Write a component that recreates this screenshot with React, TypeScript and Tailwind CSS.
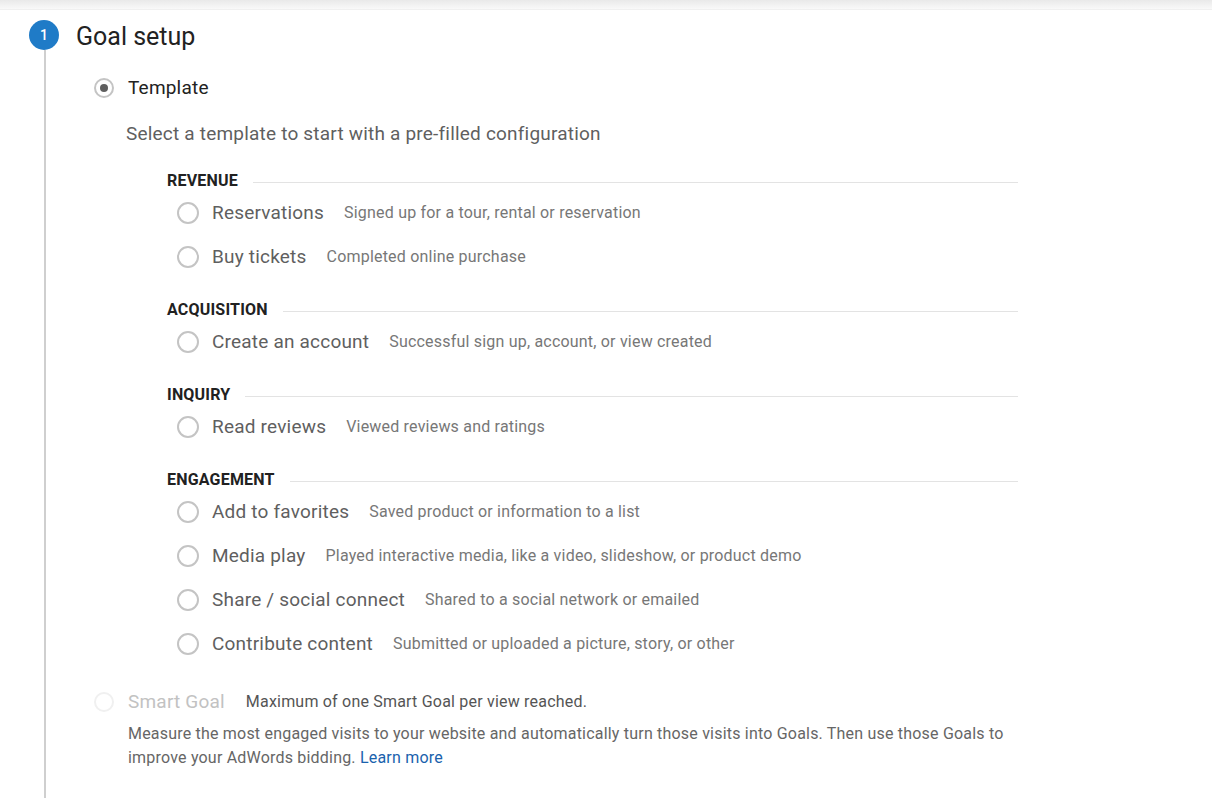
import React from "react";

type Option = { label: string; desc: string };
type Group = { title: string; options: Option[] };

const groups: Group[] = [
  {
    title: "REVENUE",
    options: [
      { label: "Reservations", desc: "Signed up for a tour, rental or reservation" },
      { label: "Buy tickets", desc: "Completed online purchase" },
    ],
  },
  {
    title: "ACQUISITION",
    options: [{ label: "Create an account", desc: "Successful sign up, account, or view created" }],
  },
  {
    title: "INQUIRY",
    options: [{ label: "Read reviews", desc: "Viewed reviews and ratings" }],
  },
  {
    title: "ENGAGEMENT",
    options: [
      { label: "Add to favorites", desc: "Saved product or information to a list" },
      { label: "Media play", desc: "Played interactive media, like a video, slideshow, or product demo" },
      { label: "Share / social connect", desc: "Shared to a social network or emailed" },
      { label: "Contribute content", desc: "Submitted or uploaded a picture, story, or other" },
    ],
  },
];

function Radio({ checked, disabled, size = "md" }: { checked?: boolean; disabled?: boolean; size?: "sm" | "md" }) {
  return (
    <span
      className={
        "flex shrink-0 items-center justify-center rounded-full border-2 " +
        (size === "sm" ? "h-[20px] w-[20px] " : "h-[22px] w-[22px] ") +
        (disabled ? "border-[#f0f0f0]" : "border-[#c4c4c4]")
      }
    >
      {checked && <span className="h-[8px] w-[8px] rounded-full bg-[#5f5f5f]" />}
    </span>
  );
}

function GroupSection({ group, first }: { group: Group; first: boolean }) {
  return (
    <section className={first ? "mt-[24px]" : "mt-[20px]"}>
      <div className="flex h-[21px] items-center">
        <span className="text-[16px] font-bold leading-[20px] tracking-[0.2px] text-[#212121]">{group.title}</span>
        <span className="ml-[15px] mt-1 h-px flex-1 bg-[#e3e3e3]" />
      </div>
      {group.options.map((o) => (
        <div key={o.label} className="flex h-[44px] items-center pl-[10px]">
          <Radio />
          <span className="ml-[13px] text-[19px] tracking-[0.2px] text-[#5f5f5f]">{o.label}</span>
          <span className="ml-[20px] text-[16px] tracking-[0.2px] text-[#777]">{o.desc}</span>
        </div>
      ))}
    </section>
  );
}

export default function App() {
  return (
    <div className="flex min-h-[798px] flex-col bg-white font-['Roboto',sans-serif]">
      <div className="h-[10px] border-b border-[#f0f0f0] bg-gradient-to-b from-[#e9e9e9] to-[#f9f9f9]" />
      <div className="flex flex-1 pl-[29px] pt-[10px]">
        <div className="flex w-[30px] flex-col items-center">
          <div className="flex h-[30px] w-[30px] items-center justify-center rounded-full bg-[#1f7bc7] text-[14px] font-medium text-white">
            1
          </div>
          <div className="ml-[1px] w-[2px] flex-1 bg-[#cfcfcf]" />
        </div>
        <div className="ml-[17px] w-[942px] pb-[28px]">
          <h1 className="h-[30px] text-[25px] leading-[33px] text-[#222]">Goal setup</h1>

          <div className="mt-[26px] flex h-6 items-center pl-[18px]">
            <Radio checked size="sm" />
            <span className="ml-[14px] text-[19px] tracking-[0.2px] text-[#222]">Template</span>
          </div>

          <p className="ml-[50px] mt-[22px] text-[19px] leading-6 tracking-[0.2px] text-[#5f5f5f]">
            Select a template to start with a pre-filled configuration
          </p>

          <div className="ml-[91px]">
            {groups.map((g, i) => (
              <GroupSection key={g.title} group={g} first={i === 0} />
            ))}
          </div>

          <div className="mt-[24px] flex h-6 items-center pl-[18px]">
            <Radio disabled size="sm" />
            <span className="ml-[14px] text-[19px] tracking-[0.2px] text-[#c2c2c2]">Smart Goal</span>
            <span className="ml-[21px] text-[16px] tracking-[0.2px] text-[#555]">
              Maximum of one Smart Goal per view reached.
            </span>
          </div>
          <p className="ml-[52px] mt-[8px] w-[885px] text-[16px] leading-6 tracking-[0.2px] text-[#666]">
            Measure the most engaged visits to your website and automatically turn those visits into Goals. Then use those
            Goals to improve your AdWords bidding. <span className="text-[#1a62ad]">Learn more</span>
          </p>
        </div>
      </div>
    </div>
  );
}
